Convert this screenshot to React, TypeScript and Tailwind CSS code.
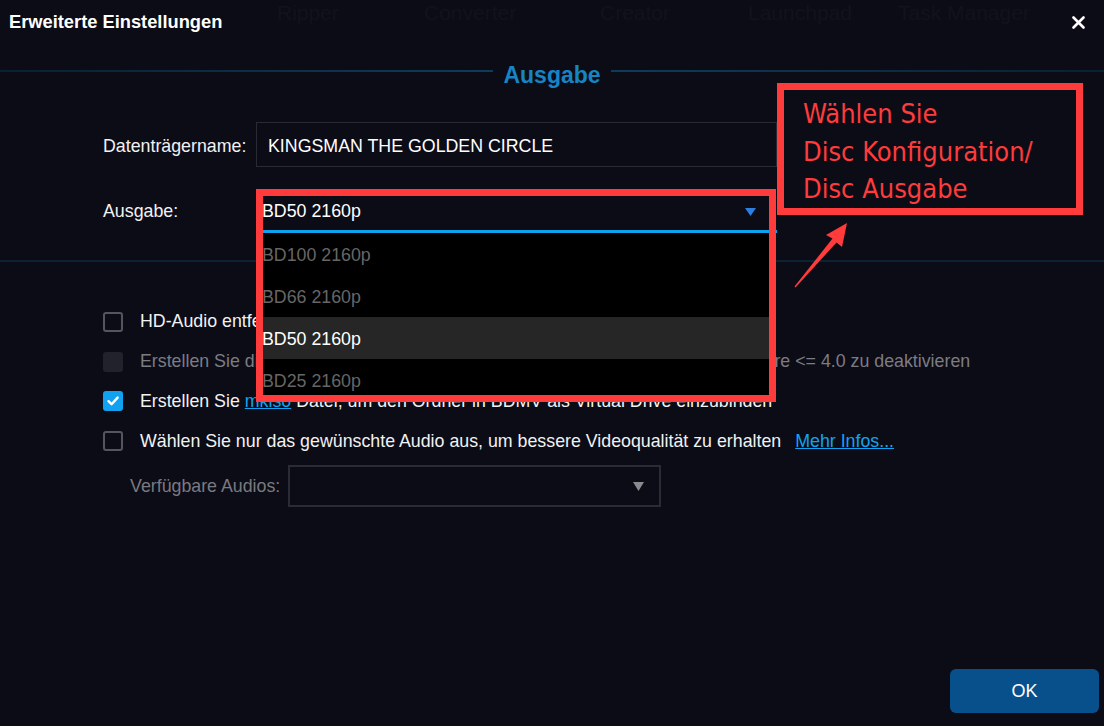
import React from 'react';

type CheckState = 'off' | 'disabled' | 'on';

const ui = "font-['Liberation_Sans',Arial,sans-serif]";

function Checkbox({ state }: { state: CheckState }) {
  if (state === 'on') {
    return (
      <span className="flex h-[20px] w-[20px] shrink-0 items-center justify-center rounded-[3px] bg-[#10a2f0]">
        <svg width="14" height="14" viewBox="0 0 14 14" fill="none">
          <path d="M2.5 7.2 L5.6 10.2 L11.6 3.6" stroke="#fff" strokeWidth="2.4" strokeLinecap="round" strokeLinejoin="round" />
        </svg>
      </span>
    );
  }
  if (state === 'disabled') {
    return <span className="h-[20px] w-[20px] shrink-0 rounded-[3px] bg-[#22222c]" />;
  }
  return <span className="h-[20px] w-[20px] shrink-0 rounded-[3px] border-2 border-[#55555f]" />;
}

const outputs = ['BD100 2160p', 'BD66 2160p', 'BD50 2160p', 'BD25 2160p'];

export default function App() {
  const selected = 'BD50 2160p';

  return (
    <div className={`relative h-[726px] w-[1104px] overflow-hidden bg-[#0c0c17] ${ui}`}>
      {/* main window behind the dialog, barely visible */}
      <div className="flex flex-col text-[#12121d]">
        <div className="flex h-[26px] items-center pl-[277px] text-[21px]">
          <span className="w-[147px]">Ripper</span>
          <span className="w-[176px]">Converter</span>
          <span className="w-[148px]">Creator</span>
          <span className="w-[150px]">Launchpad</span>
          <span>Task Manager</span>
        </div>
        <div className="mt-[234px] h-[2px] bg-[#0c2233]" />
      </div>

      {/* dialog */}
      <div className="absolute inset-0 flex flex-col">
        <div className="flex h-[44px] items-center justify-between pl-[9px] pr-[19px]">
          <span className="text-[18.3px] font-bold text-white">Erweiterte Einstellungen</span>
          <svg width="13" height="13" viewBox="0 0 13 13">
            <path d="M1.5 1.5 L11.5 11.5 M11.5 1.5 L1.5 11.5" stroke="#fff" strokeWidth="2.6" strokeLinecap="round" />
          </svg>
        </div>

        <div className="mt-[16px] flex h-[30px] items-center gap-[10px]">
          <div className="mb-[8px] h-[2px] flex-1 bg-gradient-to-r from-[#0a2132] to-[#0e3c59]" />
          <span className="text-[23px] font-bold leading-none text-[#1784c4]">Ausgabe</span>
          <div className="mb-[8px] h-[2px] flex-1 bg-gradient-to-l from-[#0a2132] to-[#0e3c59]" />
        </div>

        <div className="mt-[32px] flex flex-col pl-[103px] text-[17.8px]">
          <div className="flex h-[45px] items-center pt-[3px]">
            <span className="w-[153px] text-[#f2f2f2]">Datenträgername:</span>
            <div className="-mt-[3px] flex h-[45px] w-[521px] items-center border border-[#2a2a35] pl-[11px] pt-[3px] text-white">
              KINGSMAN THE GOLDEN CIRCLE
            </div>
          </div>

          <div className="mt-[22px] flex items-center">
            <span className="w-[153px] text-[#f2f2f2]">Ausgabe:</span>
            <div className="relative flex h-[44px] w-[521px] items-center justify-between border-b-[3px] border-[#0ea2ee] pl-[6px] pr-[21px] pt-[4px] text-white">
              <span>{selected}</span>
              <svg width="11" height="8" viewBox="0 0 11 8">
                <path d="M0 0 H11 L5.5 8 Z" fill="#2b7ee2" />
              </svg>

              <div className="absolute left-0 top-[44px] z-10 flex w-[520px] flex-col bg-black">
                {outputs.map((o) => (
                  <div
                    key={o}
                    className={`flex h-[42px] items-center pl-[6px] pt-[3px] ${o === selected ? 'bg-[#262626] text-white' : 'text-[#666666]'}`}
                  >
                    {o}
                  </div>
                ))}
              </div>

              <div className="pointer-events-none absolute left-0 top-0 z-20 h-[213px] w-[520px] border-[7px] border-[#ff3b3b]" />
            </div>
          </div>

          <div className="mt-[68px] flex h-[40px] items-center gap-[17px] pt-[1px] text-[#f2f2f2]">
            <Checkbox state="off" />
            <span>HD-Audio entfernen</span>
          </div>
          <div className="flex h-[40px] items-center gap-[17px] whitespace-nowrap pt-[1px] text-[#7c7c82]">
            <Checkbox state="disabled" />
            <span>Erstellen Sie die Disc mit AACS, um die Wiedergabe auf den Playern mit Firmware &lt;= 4.0 zu deaktivieren</span>
          </div>
          <div className="flex h-[40px] items-center gap-[17px] whitespace-nowrap text-[#f2f2f2]">
            <Checkbox state="on" />
            <span>
              Erstellen Sie <span className="text-[#12a3f0] underline">mkiso</span> Datei, um den Ordner in BDMV als Virtual Drive einzubinden
            </span>
          </div>
          <div className="flex h-[40px] items-center gap-[17px] whitespace-nowrap text-[#f2f2f2]">
            <Checkbox state="off" />
            <span>Wählen Sie nur das gewünschte Audio aus, um bessere Videoqualität zu erhalten</span>
            <span className="-ml-[3px] text-[#12a3f0] underline">Mehr Infos...</span>
          </div>

          <div className="mt-[4px] flex items-center gap-[8px] pl-[27px]">
            <span className="text-[#7a7a80]">Verfügbare Audios:</span>
            <div className="flex h-[42px] w-[373px] items-center justify-end border-2 border-[#2b2b36] pr-[15px]">
              <svg width="11" height="9" viewBox="0 0 11 9">
                <path d="M0 0 H11 L5.5 9 Z" fill="#8a8a8e" />
              </svg>
            </div>
          </div>
        </div>

        <button className="mb-[13px] mr-[5px] mt-auto flex h-[44px] w-[149px] items-center justify-center self-end rounded-[6px] bg-[#07508b] text-[18px] text-white">
          OK
        </button>

        {/* annotation */}
        <div className="pointer-events-none absolute left-[777px] top-[83px] flex h-[132px] w-[306px] flex-col border-[7px] border-[#ff3b3b] pl-[19px] pt-[5px] font-['DejaVu_Sans_Condensed','DejaVu_Sans',sans-serif] text-[27px] leading-[37.5px] text-[#ff3b3b]">
          <span>Wählen Sie</span>
          <span>Disc Konfiguration/</span>
          <span>Disc Ausgabe</span>
        </div>
        <svg className="pointer-events-none absolute left-[790px] top-[215px]" width="62" height="78" viewBox="0 0 62 78">
          <path d="M57 8 L52 32 L46.5 27.5 L5.5 72.5 L4.5 71.5 L42.5 23.5 L36 20 Z" fill="#ff3b3b" />
        </svg>
      </div>
    </div>
  );
}
